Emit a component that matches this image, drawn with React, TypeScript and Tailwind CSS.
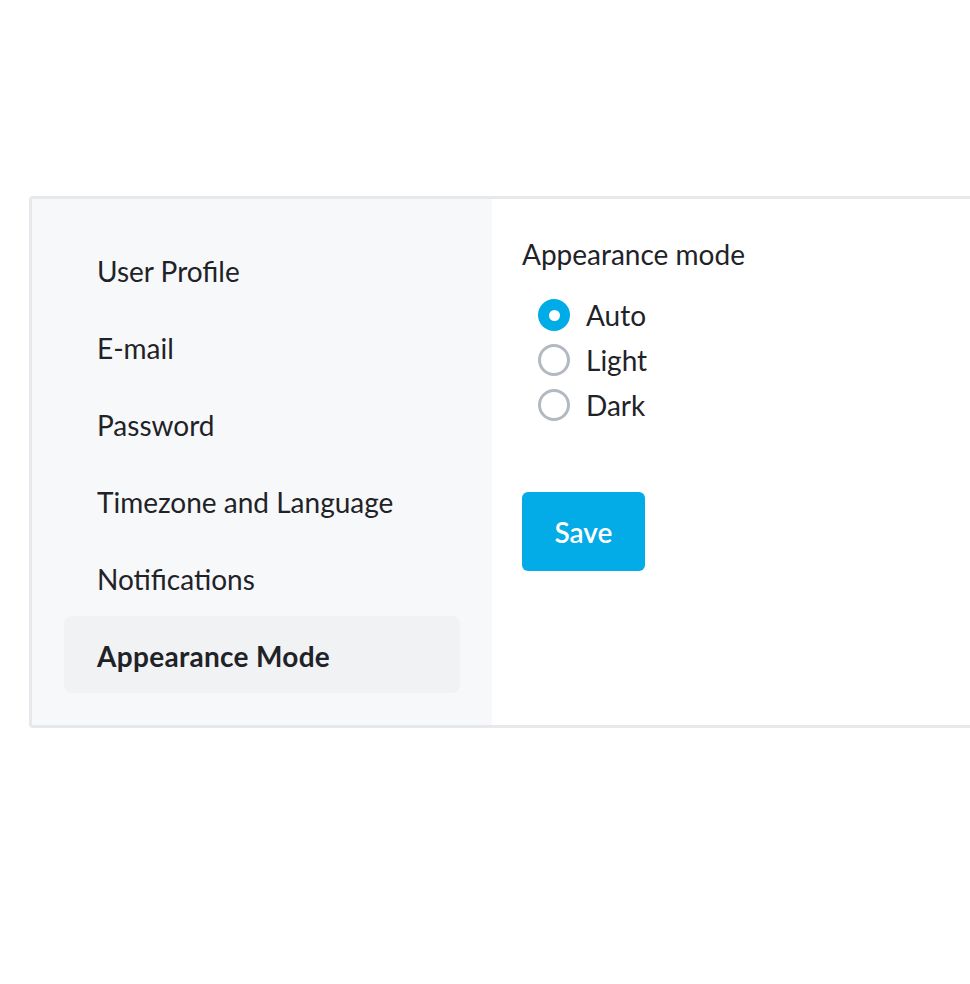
import { useState } from 'react';

const menuItems = [
  'User Profile',
  'E-mail',
  'Password',
  'Timezone and Language',
  'Notifications',
  'Appearance Mode',
];

const modes = ['Auto', 'Light', 'Dark'];

export default function App() {
  const [active, setActive] = useState('Appearance Mode');
  const [mode, setMode] = useState('Auto');

  return (
    <div
      className="min-h-screen bg-white pt-[196px] pl-[29px] overflow-hidden text-[#1f2328]"
      style={{ fontFamily: 'Lato, "Open Sans", sans-serif' }}
    >
      <div className="flex w-[1000px] rounded-l-[4px] border-[3px] border-r-0 border-[#e6e8eb]">
        {/* Sidebar */}
        <nav className="w-[460px] bg-[#f7f8fa] p-8">
          {menuItems.map((item) => (
            <button
              key={item}
              onClick={() => setActive(item)}
              className={`flex h-[77px] w-full items-center rounded-lg pl-[33px] pt-[2px] text-left text-[28px] ${
                active === item ? 'bg-[#f1f2f4] font-bold tracking-[0.3px]' : ''
              }`}
            >
              {item}
            </button>
          ))}
        </nav>

        {/* Content */}
        <div className="flex-1 bg-white pl-[30px] pt-[36px]">
          <h2 className="text-[28px] leading-[38px]">Appearance mode</h2>
          <div className="mt-[26px] flex flex-col gap-[13px] pl-4">
            {modes.map((m) => (
              <label
                key={m}
                onClick={() => setMode(m)}
                className="flex h-8 cursor-pointer items-center gap-4 text-[28px]"
              >
                {mode === m ? (
                  <span className="flex h-8 w-8 items-center justify-center rounded-full bg-[#00ace8]">
                    <span className="h-[11px] w-[11px] rounded-full bg-white" />
                  </span>
                ) : (
                  <span className="h-8 w-8 rounded-full border-[3px] border-[#b3b9c0]" />
                )}
                {m}
              </label>
            ))}
          </div>
          <button className="mt-[71px] h-[79px] w-[123px] rounded-md bg-[#03abe7] text-[28px] font-semibold text-white">
            Save
          </button>
        </div>
      </div>
    </div>
  );
}
